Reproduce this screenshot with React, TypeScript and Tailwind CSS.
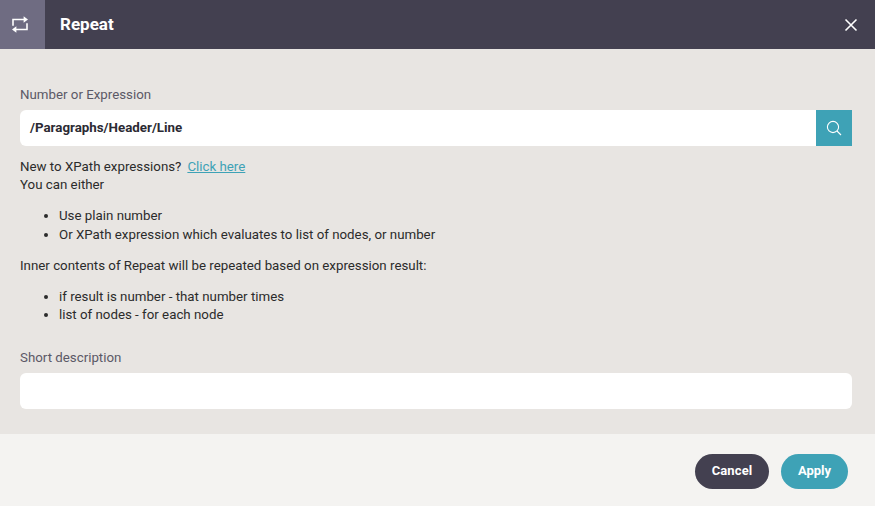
import React from "react";

function RepeatIcon() {
  return (
    <svg width="18" height="18" viewBox="0 0 18 18" fill="none" stroke="white" strokeWidth="1.6">
      <path d="M2 9.8V3.5H14" />
      <path d="M16 7.2V13.5H4" />
      <path d="M12.6 0.3L17 3.5L12.6 6.7Z" fill="white" stroke="none" />
      <path d="M5.4 10.3L1 13.5L5.4 16.7Z" fill="white" stroke="none" />
    </svg>
  );
}

export default function App() {
  return (
    <div className="w-[875px] h-[506px] flex flex-col bg-[#e8e5e2] font-['Roboto',sans-serif] overflow-hidden">
      <header className="h-[49px] flex items-center bg-[#434050] text-white shrink-0">
        <div className="w-[45px] h-[49px] bg-[#6f6c82] flex items-center justify-center pr-[5px]">
          <RepeatIcon />
        </div>
        <h1 className="ml-[15px] text-[17px] font-bold flex-1">Repeat</h1>
        <button className="mr-[17px] flex">
          <svg width="14" height="14" viewBox="0 0 14 14" stroke="white" strokeWidth="1.6" fill="none">
            <path d="M1.5 1.5L12.5 12.5M12.5 1.5L1.5 12.5" />
          </svg>
        </button>
      </header>
      <main className="flex-1 px-5 pt-[37px] text-[13.3px] leading-[18px] text-[#2b2b2b]">
        <label className="block text-[#5b5966] mb-[6px]">Number or Expression</label>
        <div className="flex h-9 w-[832px]">
          <div className="flex-1 bg-white rounded-l-md flex items-center px-[10px] font-bold text-[13.33px] text-[#2b2a33]">
            /Paragraphs/Header/Line
          </div>
          <div className="w-9 bg-[#3ea2b6] flex items-center justify-center">
            <svg width="16" height="16" viewBox="0 0 16 16" fill="none" stroke="white" strokeWidth="1.1">
              <circle cx="7" cy="7" r="5.6" />
              <path d="M11 11L15 15" />
            </svg>
          </div>
        </div>
        <p className="mt-3">
          New to XPath expressions?
          <a className="ml-[6px] text-[#3ea2b6] underline">Click here</a>
        </p>
        <p>You can either</p>
        <ul className="list-disc pl-[39px] mt-[13px]">
          <li>Use plain number</li>
          <li className="mt-px">Or XPath expression which evaluates to list of nodes, or number</li>
        </ul>
        <p className="mt-[13px]">Inner contents of Repeat will be repeated based on expression result:</p>
        <ul className="list-disc pl-[39px] mt-[13px]">
          <li>if result is number - that number times</li>
          <li>list of nodes - for each node</li>
        </ul>
        <label className="block text-[#5b5966] mt-[25px] mb-[6px]">Short description</label>
        <div className="h-9 w-[832px] bg-white rounded-md" />
      </main>
      <footer className="h-[72px] bg-[#f4f3f1] flex items-center justify-end gap-3 pr-[27px] pt-[3px] shrink-0">
        <button className="h-[35px] w-[74px] rounded-full bg-[#434050] text-white text-[13px] font-bold tracking-[0.1px] pb-[2px]">Cancel</button>
        <button className="h-[35px] w-[67px] rounded-full bg-[#3ea2b6] text-white text-[13px] font-bold pb-[2px]">Apply</button>
      </footer>
    </div>
  );
}
